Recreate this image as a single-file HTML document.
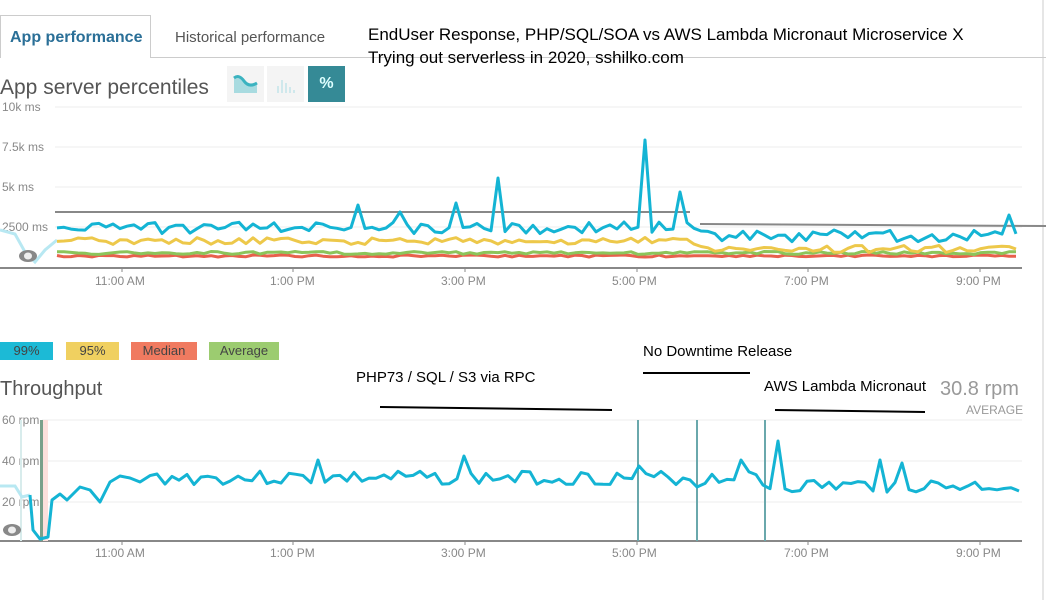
<!DOCTYPE html>
<html><head><meta charset="utf-8"><style>
body{margin:0;width:1046px;height:600px;background:#fff;overflow:hidden;position:relative;font-family:"Liberation Sans",sans-serif;}
.a{position:absolute;white-space:nowrap}
.g{color:#888;font-size:12px}
.lg{position:absolute;top:342px;height:18px;font-size:13px;color:#444;text-align:center;line-height:18px}
</style></head><body>
<div class="a" style="left:0;top:15px;width:149px;height:42px;border:1px solid #ccc;border-bottom:none;background:#fff"></div>
<div class="a" style="left:150px;top:57px;width:896px;border-top:1px solid #ccc"></div>
<div class="a" style="left:10px;top:29px;font-size:16px;font-weight:bold;color:#2a6f97">App performance</div>
<div class="a" style="left:175px;top:29px;font-size:15px;color:#555">Historical performance</div>
<div class="a" style="left:368px;top:25px;font-size:17px;color:#000">EndUser Response, PHP/SQL/SOA vs AWS Lambda Micronaut Microservice X</div>
<div class="a" style="left:368px;top:48px;font-size:17px;color:#000">Trying out serverless in 2020, sshilko.com</div>
<div class="a" style="left:0;top:76px;font-size:21px;color:#555">App server percentiles</div>
<div class="a" style="left:227px;top:66px;width:37px;height:36px;background:#f4f4f4"><svg width="37" height="36"><path d="M7 27 L7 12 Q12 8 17 15 Q22 22 30 17 L30 27Z" fill="#a8dbe0"/><path d="M7 12 Q12 8 17 15 Q22 22 30 17" stroke="#3bb3c0" stroke-width="3" fill="none"/></svg></div>
<div class="a" style="left:267px;top:66px;width:37px;height:36px;background:#f4f4f4"><svg width="37" height="36"><g fill="#cfe8ec"><rect x="10" y="20" width="2" height="7"/><rect x="14" y="14" width="2" height="13"/><rect x="18" y="17" width="2" height="10"/><rect x="22" y="21" width="2" height="6"/><rect x="26" y="24" width="2" height="3"/></g></svg></div>
<div class="a" style="left:308px;top:66px;width:37px;height:36px;background:#358a96;color:#dff;font-size:16px;font-weight:bold;text-align:center;line-height:36px">%</div>
<div class="a g" style="left:2px;top:100px">10k ms</div>
<div class="a g" style="left:2px;top:140px">7.5k ms</div>
<div class="a g" style="left:2px;top:180px">5k ms</div>
<div class="a g" style="left:2px;top:220px">2500 ms</div>
<div class="a g" style="left:95px;top:274px">11:00 AM</div>
<div class="a g" style="left:270px;top:274px">1:00 PM</div>
<div class="a g" style="left:441px;top:274px">3:00 PM</div>
<div class="a g" style="left:612px;top:274px">5:00 PM</div>
<div class="a g" style="left:784px;top:274px">7:00 PM</div>
<div class="a g" style="left:956px;top:274px">9:00 PM</div>
<div class="lg" style="left:0;width:53px;background:#1cbad6">99%</div>
<div class="lg" style="left:66px;width:53px;background:#f0d060">95%</div>
<div class="lg" style="left:131px;width:66px;background:#f07a60">Median</div>
<div class="lg" style="left:209px;width:70px;background:#9ccc70">Average</div>
<div class="a" style="left:0;top:378px;font-size:20px;color:#555">Throughput</div>
<div class="a" style="left:356px;top:369px;font-size:15px;color:#000">PHP73 / SQL / S3 via RPC</div>
<div class="a" style="left:643px;top:343px;font-size:15px;color:#000">No Downtime Release</div>
<div class="a" style="left:764px;top:378px;font-size:15px;color:#000">AWS Lambda Micronaut</div>
<div class="a" style="left:940px;top:378px;font-size:20px;color:#999">30.8 rpm</div>
<div class="a" style="left:966px;top:403px;font-size:12px;color:#999">AVERAGE</div>
<div class="a g" style="left:2px;top:413px">60 rpm</div>
<div class="a g" style="left:2px;top:454px">40 rpm</div>
<div class="a g" style="left:2px;top:495px">20 rpm</div>
<div class="a g" style="left:95px;top:546px">11:00 AM</div>
<div class="a g" style="left:270px;top:546px">1:00 PM</div>
<div class="a g" style="left:441px;top:546px">3:00 PM</div>
<div class="a g" style="left:612px;top:546px">5:00 PM</div>
<div class="a g" style="left:784px;top:546px">7:00 PM</div>
<div class="a g" style="left:956px;top:546px">9:00 PM</div>
<svg class="a" style="left:0;top:0" width="1046" height="600" id="s">
<g stroke="#eee" stroke-width="1">
<line x1="55" y1="107" x2="1022" y2="107"/><line x1="55" y1="147" x2="1022" y2="147"/><line x1="55" y1="187" x2="1022" y2="187"/><line x1="55" y1="227" x2="1022" y2="227"/>
<line x1="42" y1="420" x2="1022" y2="420"/><line x1="42" y1="461" x2="1022" y2="461"/><line x1="42" y1="502" x2="1022" y2="502"/>
</g>
<line x1="0" y1="268" x2="1022" y2="268" stroke="#888" stroke-width="2"/>
<line x1="0" y1="541" x2="1022" y2="541" stroke="#888" stroke-width="2"/>
<g stroke="#888"><line x1="122" y1="268" x2="122" y2="272"/><line x1="293" y1="268" x2="293" y2="272"/><line x1="465" y1="268" x2="465" y2="272"/><line x1="637" y1="268" x2="637" y2="272"/><line x1="808" y1="268" x2="808" y2="272"/><line x1="980" y1="268" x2="980" y2="272"/>
<line x1="122" y1="541" x2="122" y2="545"/><line x1="293" y1="541" x2="293" y2="545"/><line x1="465" y1="541" x2="465" y2="545"/><line x1="637" y1="541" x2="637" y2="545"/><line x1="808" y1="541" x2="808" y2="545"/><line x1="980" y1="541" x2="980" y2="545"/></g>
<line x1="1043" y1="0" x2="1043" y2="600" stroke="#ccc"/>
<line x1="55" y1="212" x2="690" y2="212" stroke="#888" stroke-width="2"/>
<line x1="700" y1="224" x2="1046" y2="226" stroke="#888" stroke-width="2"/>
<rect x="40" y="420" width="3" height="121" fill="#7aa08a"/><rect x="43" y="420" width="5" height="121" fill="#fde0dc"/>
<rect x="20" y="420" width="2" height="121" fill="#d8ecec"/>
<g stroke="#6aa8ac" stroke-width="2"><line x1="638" y1="420" x2="638" y2="541"/><line x1="697" y1="420" x2="697" y2="541"/><line x1="765" y1="420" x2="765" y2="541"/></g>
<g stroke="#000" stroke-width="2"><line x1="380" y1="407" x2="612" y2="410"/><line x1="643" y1="373" x2="750" y2="373"/><line x1="775" y1="410" x2="925" y2="412"/></g>
<polyline points="0,230 15,234 25,252 35,262 45,250 57,240" fill="none" stroke="#b8e8f2" stroke-width="3"/>
<polyline points="0,486 15,486 22,497 30,495" fill="none" stroke="#b8e8f2" stroke-width="3"/>
<ellipse cx="28" cy="256" rx="9" ry="6" fill="#888"/><ellipse cx="28" cy="256" rx="4" ry="3.5" fill="#eee"/>
<ellipse cx="12" cy="530" rx="9" ry="6" fill="#888"/><ellipse cx="12" cy="530" rx="4" ry="3.5" fill="#eee"/>
</svg>
<script>
var s=document.getElementById('s'),seed=7;function r(){seed=(seed*9301+49297)%233280;return seed/233280;}
function pl(pts,c,w){var p=document.createElementNS('http://www.w3.org/2000/svg','polyline');p.setAttribute('points',pts.join(' '));p.setAttribute('fill','none');p.setAttribute('stroke',c);p.setAttribute('stroke-width',w);p.setAttribute('stroke-linejoin','round');s.appendChild(p);}
var spikes={358:205,500:178,643:140,680:192,1008:215,457:203,398:212};
var a=[],b=[],c=[],d=[];
for(var x=57;x<=1022;x+=7){var xi=Math.round(x);var base=x<700?228:236;var y=base+(r()-0.5)*12;
for(var k in spikes){if(Math.abs(xi-k)<4)y=spikes[k];}
a.push(xi+','+y.toFixed(1));b.push(xi+','+(base+13+(r()-0.5)*7).toFixed(1));c.push(xi+','+(253+(r()-0.5)*3).toFixed(1));d.push(xi+','+(256+(r()-0.5)*2).toFixed(1));}
pl(d,'#e8604c',3);pl(c,'#8cc45a',3);pl(b,'#edc84a',3);pl(a,'#14b4d4',3);
var t=['30,495','33,530','40,539','48,537','52,500','60,494','67,500','80,487','90,490','100,502','110,482','120,476','130,478','140,482'];
var sp={318:460,463:456,640:466,697:487,738:460,780:441,880:460,905:463};
seed=3;for(var x=150;x<=1022;x+=7.3){var xi=Math.round(x);var y=(x<760?478:486)+(r()-0.5)*14;for(var k in sp){if(Math.abs(xi-k)<4)y=sp[k];}if(xi>1015)y=491;t.push(xi+','+y.toFixed(1));}
pl(t,'#14b4d4',3);
</script>
</body></html>
